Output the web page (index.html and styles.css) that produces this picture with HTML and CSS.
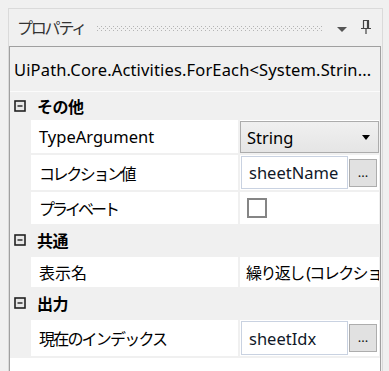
FILE: index.html
```html
<!DOCTYPE html>
<html lang="ja">
<head>
<meta charset="utf-8">
<link rel="stylesheet" href="styles.css">
</head>
<body>
<div class="panel">
  <div class="titlebar">
    <span class="title">プロパティ</span>
    <span class="grip"></span>
    <svg class="drop" width="10" height="6" viewBox="0 0 10 6"><path d="M0 0H10L5 5Z" fill="#555"/></svg>
    <svg class="pin" width="12" height="16" viewBox="0 0 12 16"><path d="M3 1.5H9M3.5 1.5V9.5M8.5 1.5V9.5M7.5 1.5V9.5M1 9.5H11M6 9.5V15" stroke="#444" stroke-width="1.2" fill="none"/></svg>
  </div>
  <div class="inner">
    <div class="typename">UiPath.Core.Activities.ForEach&lt;System.Strin...</div>
    <div class="grid">
      <div class="cat cat-first">
        <svg class="toggle" width="12" height="12" viewBox="0 0 12 12"><rect x="1" y="1" width="10" height="10" fill="#e8e8e8" stroke="#222" stroke-width="1.6"/><path d="M3.5 6H8.5" stroke="#222" stroke-width="1.4"/></svg>
        <span class="cat-name">その他</span>
      </div>
      <div class="row r-type">
        <div class="label">TypeArgument</div>
        <div class="value">
          <div class="combo"><span>String</span><svg class="combo-arrow" width="8" height="5" viewBox="0 0 8 5"><path d="M0 0H8L4 5Z" fill="#000"/></svg></div>
        </div>
      </div>
      <div class="row r-coll">
        <div class="label jp tight2">コレクション値</div>
        <div class="value">
          <div class="textbox">sheetName</div>
          <div class="dots">...</div>
        </div>
      </div>
      <div class="row r-priv">
        <div class="label jp tight3">プライベート</div>
        <div class="value"><span class="checkbox"></span></div>
      </div>
      <div class="cat cat-mid">
        <svg class="toggle" width="12" height="12" viewBox="0 0 12 12"><rect x="1" y="1" width="10" height="10" fill="#e8e8e8" stroke="#222" stroke-width="1.6"/><path d="M3.5 6H8.5" stroke="#222" stroke-width="1.4"/></svg>
        <span class="cat-name">共通</span>
      </div>
      <div class="row r-name">
        <div class="label jp">表示名</div>
        <div class="value"><span class="plain jp">繰り返し (コレクションの各要素)</span></div>
      </div>
      <div class="cat cat-mid">
        <svg class="toggle" width="12" height="12" viewBox="0 0 12 12"><rect x="1" y="1" width="10" height="10" fill="#e8e8e8" stroke="#222" stroke-width="1.6"/><path d="M3.5 6H8.5" stroke="#222" stroke-width="1.4"/></svg>
        <span class="cat-name">出力</span>
      </div>
      <div class="row r-idx">
        <div class="label jp tight1">現在のインデックス</div>
        <div class="value">
          <div class="textbox tb-idx">sheetIdx</div>
          <div class="dots">...</div>
        </div>
      </div>
    </div>
    <div class="footer"></div>
  </div>
</div>
</body>
</html>
```
FILE: styles.css
```css
html, body {
  margin: 0;
  padding: 0;
}
body {
  background: #f0f0f0;
  font-family: "Noto Sans", "Noto Sans CJK JP", sans-serif;
  font-size: 16.5px;
  color: #000;
  height: 371px;
  overflow: hidden;
}
.jp { font-size: 16px; }
.panel {
  margin: 8px 6px 0 8px;
  border: 1px solid #dadada;
  border-bottom: none;
  height: 363px;
  box-sizing: border-box;
  display: flex;
  flex-direction: column;
}
.titlebar {
  height: 37px;
  flex: none;
  display: flex;
  align-items: center;
  padding-left: 8px;
}
.title {
  width: 80px;
  flex: none;
  font-size: 16px;
  letter-spacing: -2.2px;
  color: #333;
  line-height: 1;
}
.grip {
  width: 226px;
  height: 5px;
  flex: none;
  margin-top: 1px;
  background:
    linear-gradient(90deg, #b4b4b4 1px, transparent 1px) 0 0 / 4px 1px repeat-x,
    linear-gradient(90deg, #b4b4b4 1px, transparent 1px) 2px 2px / 4px 1px repeat-x,
    linear-gradient(90deg, #b4b4b4 1px, transparent 1px) 0 4px / 4px 1px repeat-x;
}
.drop {
  margin-left: 14px;
  margin-top: 4px;
  flex: none;
}
.pin {
  margin-left: 13px;
  margin-top: -2px;
  flex: none;
}
.inner {
  flex: 1;
  border: 1px solid #a0a0a0;
  border-bottom: none;
  margin-right: 1px;
  background: #f0f0f0;
  display: flex;
  flex-direction: column;
}
.typename {
  height: 44px;
  flex: none;
  display: flex;
  align-items: center;
  padding-left: 4px;
  border-bottom: 1px solid #fbfbfb;
  white-space: nowrap;
  overflow: hidden;
  letter-spacing: 0.15px;
}
.grid {
  display: flex;
  flex-direction: column;
  flex: none;
}
.cat {
  display: flex;
  align-items: center;
  padding-left: 4px;
  flex: none;
}
.cat-first { height: 27px; }
.cat-mid { height: 32px; }
.cat-name {
  margin-left: 11px;
  font-size: 16px;
  font-weight: bold;
  letter-spacing: -0.5px;
}
.row {
  display: flex;
  margin-left: 21px;
  margin-right: 1px;
  gap: 2px;
  flex: none;
}
.row + .row { margin-top: 2px; }
.cat + .row { margin-top: 1px; }
.row + .cat { margin-top: 0; }
.r-type { height: 33px; }
.r-coll { height: 35px; }
.r-priv { height: 32px; }
.r-name { height: 30px; }
.r-idx { height: 36px; }
.label {
  width: 207px;
  flex: none;
  background: #fff;
  display: flex;
  align-items: center;
  padding-left: 8px;
  box-sizing: border-box;
  white-space: nowrap;
}
.tight1 { letter-spacing: -1.8px; }
.tight2 { letter-spacing: -2.4px; }
.tight3 { letter-spacing: -3px; }
.value {
  flex: 1;
  background: #fff;
  display: flex;
  align-items: center;
  overflow: hidden;
  min-width: 0;
}
.combo {
  flex: 1;
  align-self: stretch;
  margin-top: 1px;
  border: 1px solid #acacac;
  background: linear-gradient(#f0f0f0, #e5e5e5);
  display: flex;
  align-items: center;
  justify-content: space-between;
  padding: 0 8px 0 6px;
}
.combo-arrow { flex: none; }
.textbox {
  width: 107px;
  height: 33px;
  margin-left: 1px;
  border: 1px solid #c9d2e1;
  box-sizing: border-box;
  display: flex;
  align-items: center;
  padding-left: 7px;
  flex: none;
  color: #101828;
  white-space: nowrap;
  overflow: hidden;
}
.tb-idx { height: 34px; }
.dots {
  width: 28px;
  height: 28px;
  box-sizing: border-box;
  margin-left: 1px;
  border: 1px solid #adadad;
  background: #e1e1e1;
  flex: none;
  display: flex;
  align-items: flex-end;
  justify-content: center;
  font-size: 13px;
  line-height: 1;
  padding-bottom: 7px;
  color: #111;
}
.checkbox {
  width: 20px;
  height: 20px;
  box-sizing: border-box;
  margin-left: 7px;
  border: 2px solid #858585;
  background: #fff;
  flex: none;
}
.plain {
  padding-left: 6px;
  white-space: nowrap;
  letter-spacing: -1.6px;
}
.footer {
  flex: 1;
  margin-top: 2px;
  background: #fff;
}
```
